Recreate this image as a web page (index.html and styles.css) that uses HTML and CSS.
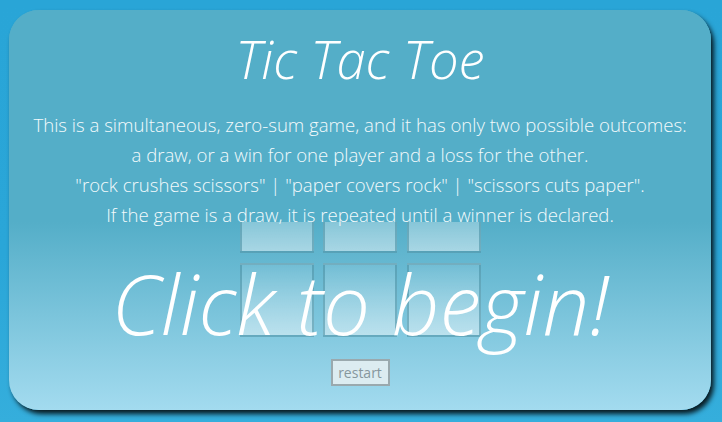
FILE: index.html
```html
<!DOCTYPE html>
<html>
<head>
<meta charset="utf-8">
<link rel="stylesheet" href="styles.css">
</head>
<body>
<div class="card">
  <header class="intro">
    <h1 class="title">Tic Tac Toe</h1>
    <p class="rules">This is a simultaneous, zero-sum game, and it has only two possible outcomes:<br>a draw, or a win for one player and a loss for the other.<br>"rock crushes scissors" | "paper covers rock" | "scissors cuts paper".<br>If the game is a draw, it is repeated until a winner is declared.</p>
  </header>
  <div class="board">
    <div class="cell"></div><div class="cell"></div><div class="cell"></div>
    <div class="cell"></div><div class="cell"></div><div class="cell"></div>
    <div class="cell"></div><div class="cell"></div><div class="cell"></div>
  </div>
  <div class="begin">Click to begin!</div>
  <div class="controls">
    <button class="restart">restart</button>
  </div>
</div>
</body>
</html>
```
FILE: styles.css
```css
html, body {
  margin: 0;
  padding: 0;
}
body {
  width: 722px;
  height: 422px;
  background: linear-gradient(to bottom, #29a5d7 0%, #2aa6d8 60%, #35aedc 100%);
  overflow: hidden;
  font-family: "Open Sans", "Noto Sans", sans-serif;
  padding-top: 10px;
  padding-left: 9px;
  box-sizing: border-box;
}
.card {
  position: relative;
  width: 702px;
  height: 400px;
  border-radius: 30px;
  background: linear-gradient(to bottom, #54aec8 0%, #54aec8 53%, #a3dbef 100%);
  box-shadow: 3px 4px 5px rgba(0, 0, 0, 0.85);
  display: flex;
  flex-direction: column;
  align-items: center;
}
.intro {
  position: relative;
  z-index: 1;
  width: 100%;
  display: flex;
  flex-direction: column;
  align-items: center;
}
.title {
  margin: 0;
  height: 100px;
  padding-top: 19px;
  box-sizing: border-box;
  font-weight: 300;
  font-style: italic;
  font-size: 52.6px;
  line-height: 60px;
  color: #ffffff;
  border-radius: 30px 30px 0 0;
  background: #54aec8;
  width: 100%;
  text-align: center;
}
.rules {
  margin: 0;
  width: 100%;
  height: 112px;
  background: #54aec8;
  text-align: center;
  color: #f3fafc;
  font-weight: 300;
  font-size: 18.6px;
  line-height: 30px;
}
.board {
  margin-top: -126.5px;
  display: grid;
  grid-template-columns: repeat(3, 74px);
  grid-template-rows: repeat(3, 74px);
  gap: 9.5px;
}
.cell {
  box-sizing: border-box;
  border: 2px solid rgba(70, 140, 160, 0.55);
  background: linear-gradient(to bottom, rgba(255, 255, 255, 0.08), rgba(255, 255, 255, 0.45));
}
.begin {
  position: absolute;
  left: 0;
  right: 0;
  top: 243px;
  text-align: center;
  color: #ffffff;
  font-style: italic;
  font-weight: 350;
  font-size: 83.5px;
  line-height: 100px;
  z-index: 2;
}
.controls {
  margin-top: 22.5px;
}
.restart {
  font-family: "Open Sans", "Noto Sans", sans-serif;
  font-size: 14px;
  color: #86979d;
  background: #dcecf1;
  border: 2px solid #9aa9ae;
  border-radius: 0;
  width: 59px;
  height: 27px;
  padding: 0;
}
```
